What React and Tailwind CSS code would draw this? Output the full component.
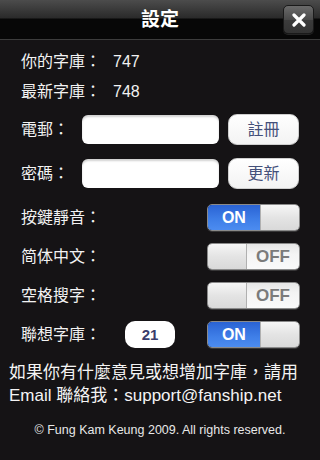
import React from "react";

const FONT = { fontFamily: '"Liberation Sans", "Noto Sans CJK TC", sans-serif' };

function Switch({ on }) {
  if (on) {
    return (
      <div className="flex h-[27px] w-[93px] overflow-hidden rounded-[5px] border border-[#8a8a8a] shadow-[0_1px_0_rgba(255,255,255,0.15)]">
        <div className="flex w-[53px] items-center justify-center bg-[linear-gradient(to_bottom,#2a63d4,#3f7fe8_60%,#4c8cf0)] text-[16px] font-bold leading-none text-white">
          ON
        </div>
        <div className="w-[40px] border-l border-[#b0b0b0] bg-[linear-gradient(to_bottom,#f6f6f6,#e4e4e4_50%,#d9d9d9)]" />
      </div>
    );
  }
  return (
    <div className="flex h-[27px] w-[93px] overflow-hidden rounded-[5px] border border-[#8a8a8a] shadow-[0_1px_0_rgba(255,255,255,0.15)]">
      <div className="w-[39px] border-r border-[#b0b0b0] bg-[linear-gradient(to_bottom,#f6f6f6,#e4e4e4_50%,#d9d9d9)]" />
      <div className="flex flex-1 items-center justify-center bg-[linear-gradient(to_bottom,#e6e6e6,#f4f4f4_40%,#fafafa)] text-[17px] font-bold leading-none text-[#7b7b7b]">
        OFF
      </div>
    </div>
  );
}

function ToggleRow({ label, on, badge, mt }) {
  return (
    <div className={`flex h-[27px] items-center pl-[21px] pr-[20px] ${mt}`}>
      <div className="w-[104px] text-[16px] leading-none text-[#f2f2f2]">{label}</div>
      {badge && (
        <div className="flex h-[27px] w-[50px] items-center justify-center rounded-[10px] bg-white text-[15px] font-bold leading-none text-[#3a3d6c]">
          {badge}
        </div>
      )}
      <div className="ml-auto">
        <Switch on={on} />
      </div>
    </div>
  );
}

function FieldRow({ label, btn, mt }) {
  return (
    <div className={`flex h-[31px] items-center pl-[21px] pr-[21px] ${mt}`}>
      <div className="w-[61px] text-[16px] leading-none text-[#f2f2f2]">{label}</div>
      <div className="h-[29px] w-[137px] rounded-[6px] bg-white shadow-[inset_0_2px_2px_rgba(0,0,0,0.18)]" />
      <div className="ml-[9px] flex h-[31px] w-[71px] items-center justify-center rounded-[9px] border border-[#cfcfcf] bg-[linear-gradient(to_bottom,#ffffff,#f3f3f3)] text-[16px] leading-none text-[#44507a]">
        {btn}
      </div>
    </div>
  );
}

export default function App() {
  return (
    <div className="h-[460px] w-[320px] overflow-hidden bg-[#151315]" style={FONT}>
      <div className="grid h-[40px] grid-cols-[1fr_auto_1fr] items-center border-b border-[#3c3c3c] bg-[linear-gradient(to_bottom,#4c4c4c_0px,#2a2a2a_18px,#070707_19px,#070707_100%)]">
        <div />
        <div className="text-[19px] font-bold leading-none text-white">設定</div>
        <div className="flex justify-end pr-[6px]">
          <div className="flex h-[29px] w-[31px] items-center justify-center rounded-[5px] border border-[#1a1a1a] bg-[linear-gradient(to_bottom,#6a6a6a,#4a4a4a_50%,#3c3c3c_51%,#333333)] shadow-[0_1px_0_rgba(255,255,255,0.12)]">
            <svg width="14" height="14" viewBox="0 0 14 14">
              <path d="M2 2 L12 12 M12 2 L2 12" stroke="white" strokeWidth="3.2" strokeLinecap="round" />
            </svg>
          </div>
        </div>
      </div>

      <div className="mt-[7px] flex h-[30px] items-center pl-[21px] text-[16px] leading-none text-[#f2f2f2]">
        <span className="w-[80px]">你的字庫：</span>
        <span className="ml-[12px]">747</span>
      </div>
      <div className="flex h-[30px] items-center pl-[21px] text-[16px] leading-none text-[#f2f2f2]">
        <span className="w-[80px]">最新字庫：</span>
        <span className="ml-[12px]">748</span>
      </div>

      <FieldRow label="電郵：" btn="註冊" mt="mt-[7px]" />
      <FieldRow label="密碼：" btn="更新" mt="mt-[13px]" />

      <ToggleRow label="按鍵靜音：" on mt="mt-[15px]" />
      <ToggleRow label="简体中文：" on={false} mt="mt-[12px]" />
      <ToggleRow label="空格搜字：" on={false} mt="mt-[12px]" />
      <ToggleRow label="聯想字庫：" on badge="21" mt="mt-[12px]" />

      <div className="mt-[13px] pl-[9px] text-[17px] leading-[23px] text-[#f4f4f4]">
        <div className="whitespace-nowrap">如果你有什麼意見或想增加字庫，請用</div>
        <div className="whitespace-nowrap">Email 聯絡我：support@fanship.net</div>
      </div>

      <div className="mt-[15px] text-center text-[12.5px] leading-[16px] text-[#e8e8e8]">
        © Fung Kam Keung 2009. All rights reserved.
      </div>
    </div>
  );
}
